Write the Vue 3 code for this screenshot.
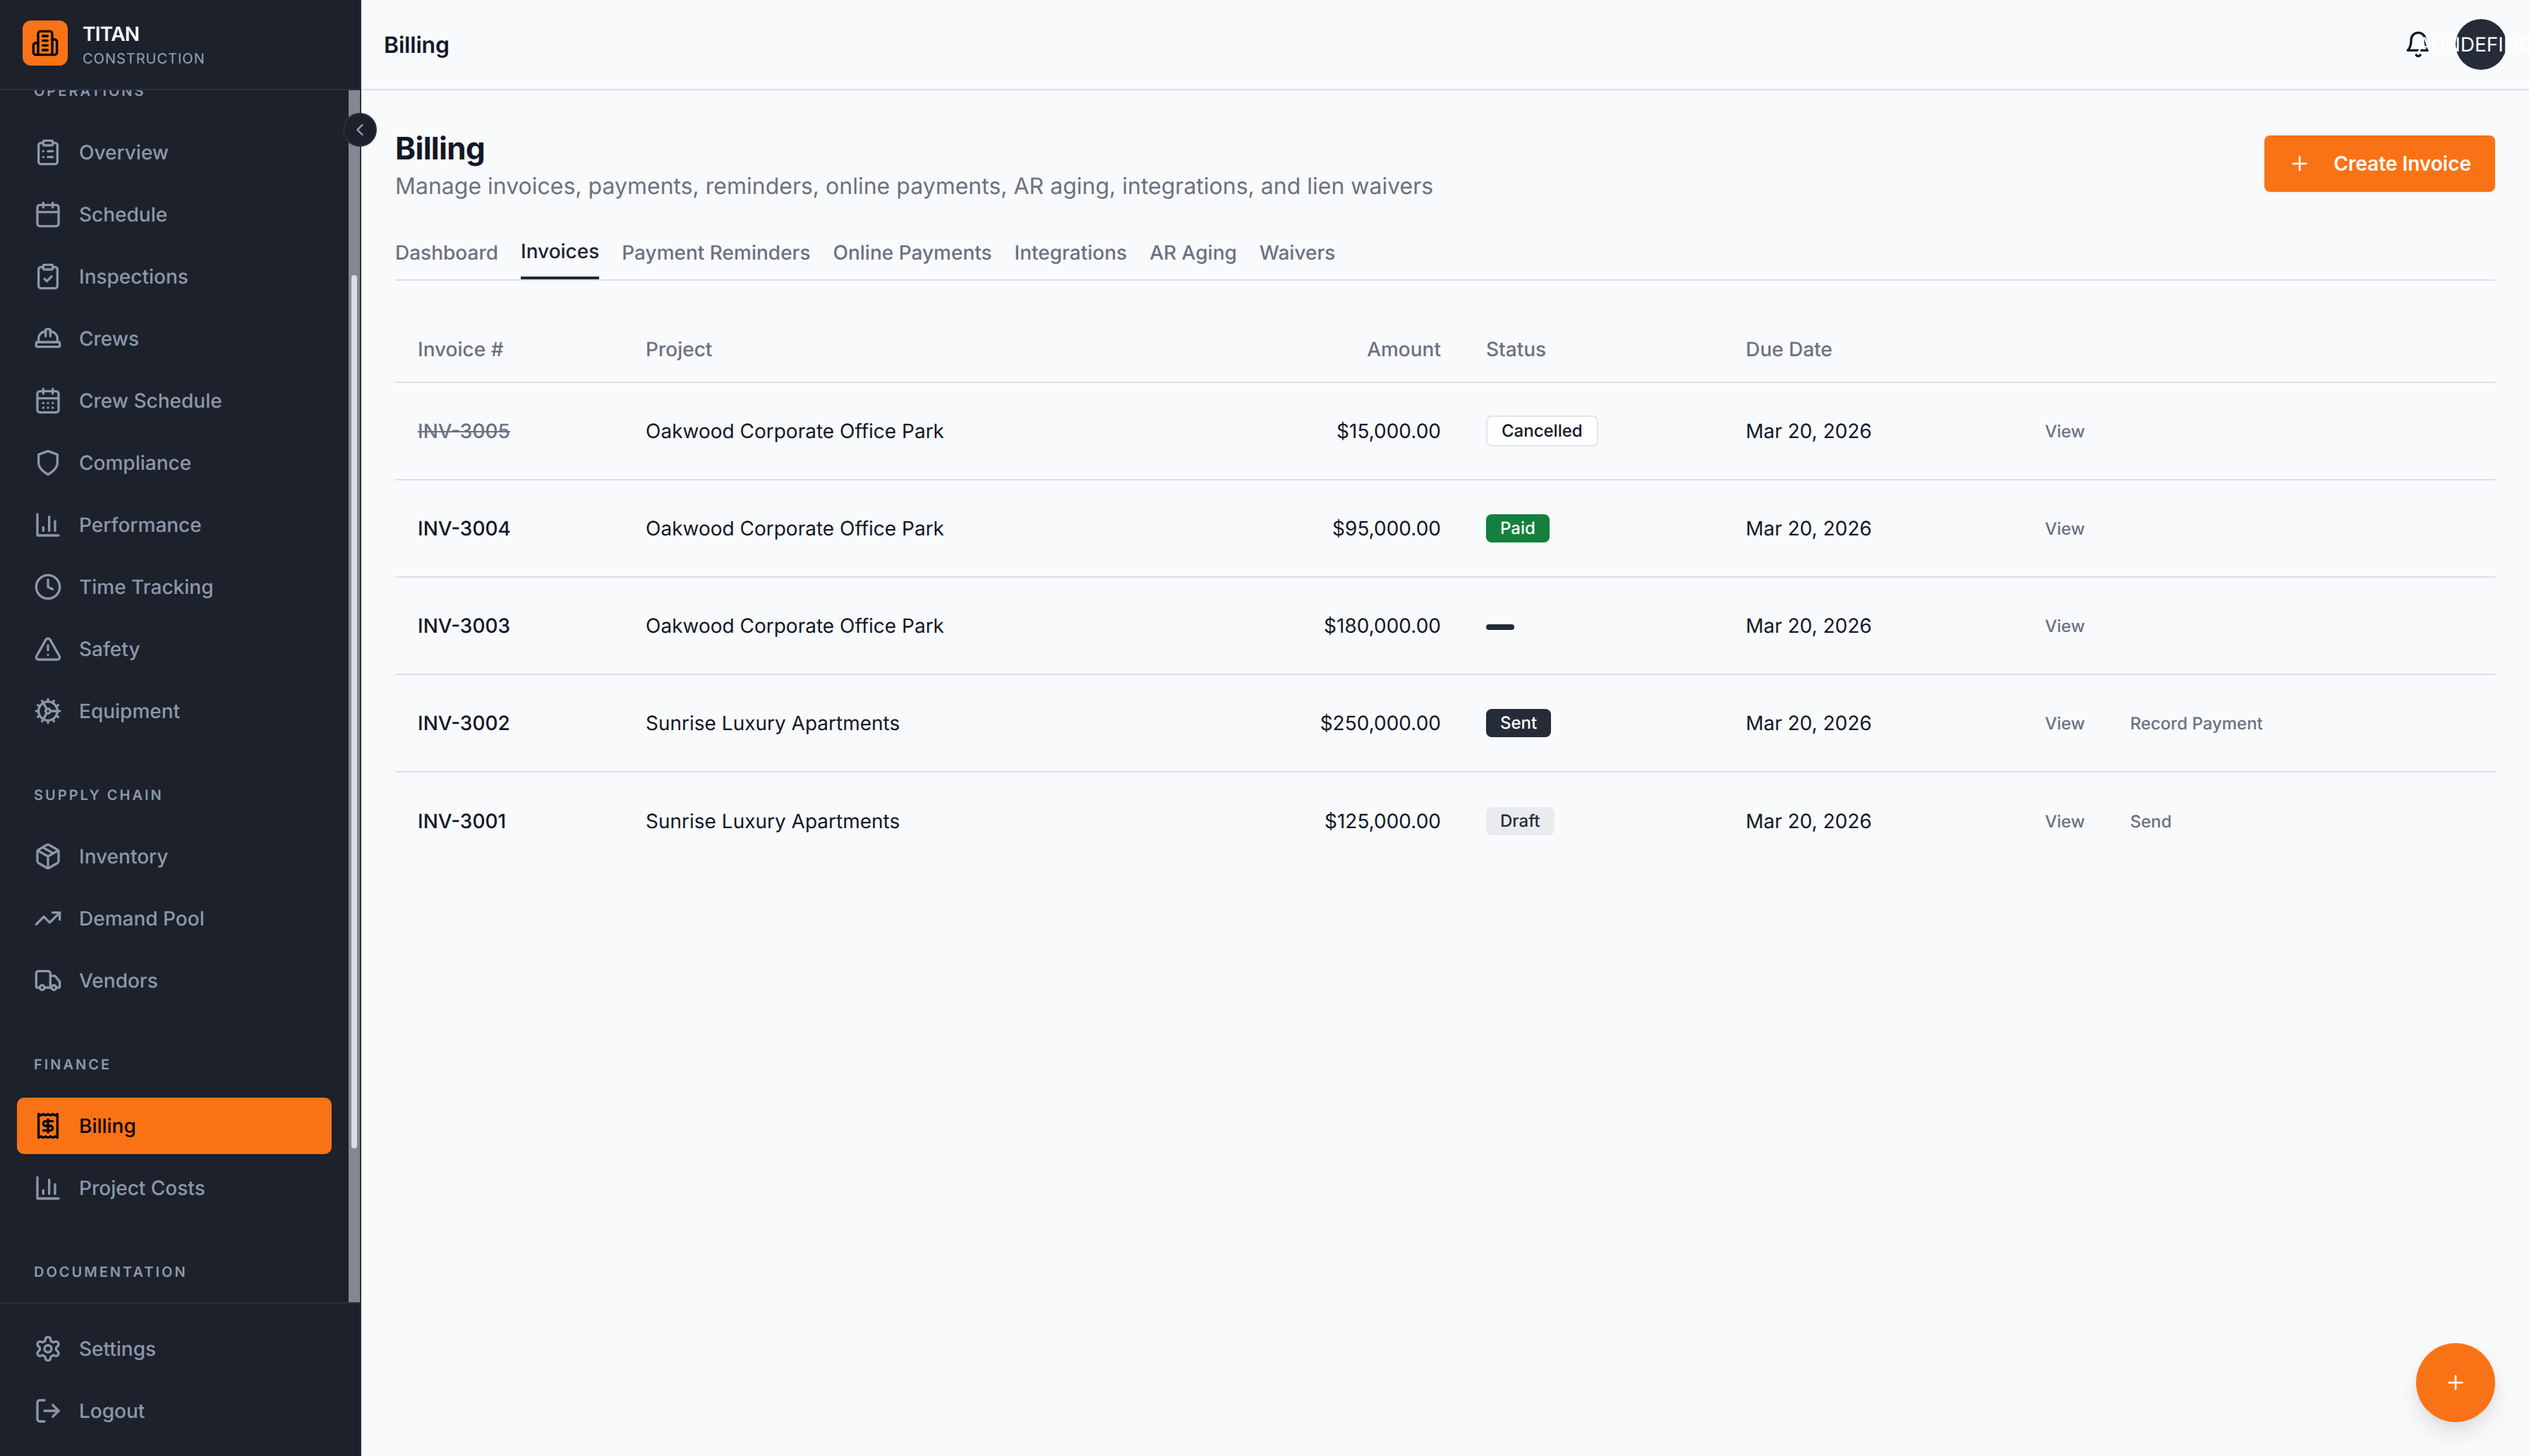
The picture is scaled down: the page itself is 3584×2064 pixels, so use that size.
<script setup>
const rectClip = 'M9 2h6a1 1 0 0 1 1 1v2a1 1 0 0 1-1 1H9a1 1 0 0 1-1-1V3a1 1 0 0 1 1-1z'
const clip = 'M16 4h2a2 2 0 0 1 2 2v14a2 2 0 0 1-2 2H6a2 2 0 0 1-2-2V6a2 2 0 0 1 2-2h2'
const cal = 'M5 4h14a2 2 0 0 1 2 2v14a2 2 0 0 1-2 2H5a2 2 0 0 1-2-2V6a2 2 0 0 1 2-2z'
const chart = ['M3 3v18h18', 'M18 17V9', 'M13 17V5', 'M8 17v-3']

const icons = {
  overview: [rectClip, clip, 'M12 11h4', 'M12 16h4', 'M8 11h.01', 'M8 16h.01'],
  schedule: ['M8 2v4', 'M16 2v4', cal, 'M3 10h18'],
  inspections: [rectClip, clip, 'm9 14 2 2 4-4'],
  crews: ['M10 10V5a1 1 0 0 1 1-1h2a1 1 0 0 1 1 1v5', 'M14 6a6 6 0 0 1 6 6v3', 'M4 15v-3a6 6 0 0 1 6-6', 'M3 15h18a1 1 0 0 1 1 1v2a1 1 0 0 1-1 1H3a1 1 0 0 1-1-1v-2a1 1 0 0 1 1-1z'],
  crewSchedule: ['M8 2v4', 'M16 2v4', cal, 'M3 10h18', 'M8 14h.01', 'M12 14h.01', 'M16 14h.01', 'M8 18h.01', 'M12 18h.01', 'M16 18h.01'],
  compliance: ['M12 22s8-4 8-10V5l-8-3-8 3v7c0 6 8 10 8 10z'],
  chart,
  clock: ['M2 12a10 10 0 1 0 20 0a10 10 0 1 0-20 0', 'M12 6v6l4 2'],
  safety: ['m21.73 18-8-14a2 2 0 0 0-3.48 0l-8 14A2 2 0 0 0 4 21h16a2 2 0 0 0 1.73-3', 'M12 9v4', 'M12 17h.01'],
  cog: ['M12 20a8 8 0 1 0 0-16 8 8 0 0 0 0 16Z', 'M12 14a2 2 0 1 0 0-4 2 2 0 0 0 0 4Z', 'M12 2v2', 'M12 22v-2', 'm17 20.66-1-1.73', 'M11 10.27 7 3.34', 'm20.66 17-1.73-1', 'm3.34 7 1.73 1', 'M14 12h8', 'M2 12h2', 'm20.66 7-1.73 1', 'm3.34 17 1.73-1', 'm17 3.34-1 1.73', 'm11 13.73-4 6.93'],
  package: ['m7.5 4.27 9 5.15', 'M21 8a2 2 0 0 0-1-1.73l-7-4a2 2 0 0 0-2 0l-7 4A2 2 0 0 0 3 8v8a2 2 0 0 0 1 1.73l7 4a2 2 0 0 0 2 0l7-4A2 2 0 0 0 21 16Z', 'm3.3 7 8.7 5 8.7-5', 'M12 22V12'],
  trending: ['M22 7 13.5 15.5 8.5 10.5 2 17', 'M16 7h6v6'],
  truck: ['M14 18V6a2 2 0 0 0-2-2H4a2 2 0 0 0-2 2v11a1 1 0 0 0 1 1h2', 'M15 18H9', 'M19 18h2a1 1 0 0 0 1-1v-3.65a1 1 0 0 0-.22-.624l-3.48-4.35A1 1 0 0 0 17.52 8H14', 'M15 18a2 2 0 1 0 4 0a2 2 0 1 0-4 0', 'M5 18a2 2 0 1 0 4 0a2 2 0 1 0-4 0'],
  receipt: ['M4 2v20l2-1 2 1 2-1 2 1 2-1 2 1 2-1 2 1V2l-2 1-2-1-2 1-2-1-2 1-2-1-2 1Z', 'M16 8h-6a2 2 0 1 0 0 4h4a2 2 0 1 1 0 4H8', 'M12 17.5v-11'],
  settings: ['M12.22 2h-.44a2 2 0 0 0-2 2v.18a2 2 0 0 1-1 1.73l-.43.25a2 2 0 0 1-2 0l-.15-.08a2 2 0 0 0-2.73.73l-.22.38a2 2 0 0 0 .73 2.73l.15.1a2 2 0 0 1 1 1.72v.51a2 2 0 0 1-1 1.74l-.15.09a2 2 0 0 0-.73 2.73l.22.38a2 2 0 0 0 2.73.73l.15-.08a2 2 0 0 1 2 0l.43.25a2 2 0 0 1 1 1.73V20a2 2 0 0 0 2 2h.44a2 2 0 0 0 2-2v-.18a2 2 0 0 1 1-1.73l.43-.25a2 2 0 0 1 2 0l.15.08a2 2 0 0 0 2.73-.73l.22-.39a2 2 0 0 0-.73-2.73l-.15-.08a2 2 0 0 1-1-1.74v-.5a2 2 0 0 1 1-1.74l.15-.09a2 2 0 0 0 .73-2.73l-.22-.38a2 2 0 0 0-2.73-.73l-.15.08a2 2 0 0 1-2 0l-.43-.25a2 2 0 0 1-1-1.73V4a2 2 0 0 0-2-2z', 'M9 12a3 3 0 1 0 6 0a3 3 0 1 0-6 0'],
  logout: ['M9 21H5a2 2 0 0 1-2-2V5a2 2 0 0 1 2-2h4', 'M16 17l5-5-5-5', 'M21 12H9'],
  building: ['M6 22V4a2 2 0 0 1 2-2h8a2 2 0 0 1 2 2v18Z', 'M6 12H4a2 2 0 0 0-2 2v6a2 2 0 0 0 2 2h2', 'M18 9h2a2 2 0 0 1 2 2v9a2 2 0 0 1-2 2h-2', 'M10 6h4', 'M10 10h4', 'M10 14h4', 'M10 18h4'],
  chevron: ['m15 18-6-6 6-6'],
  bell: ['M6 8a6 6 0 0 1 12 0c0 7 3 9 3 9H3s3-2 3-9', 'M10.3 21a1.94 1.94 0 0 0 3.4 0'],
  plus: ['M5 12h14', 'M12 5v14']
}

const sections = [
  { title: 'OPERATIONS', items: [
    { label: 'Overview', icon: 'overview' },
    { label: 'Schedule', icon: 'schedule' },
    { label: 'Inspections', icon: 'inspections' },
    { label: 'Crews', icon: 'crews' },
    { label: 'Crew Schedule', icon: 'crewSchedule' },
    { label: 'Compliance', icon: 'compliance' },
    { label: 'Performance', icon: 'chart' },
    { label: 'Time Tracking', icon: 'clock' },
    { label: 'Safety', icon: 'safety' },
    { label: 'Equipment', icon: 'cog' }
  ] },
  { title: 'SUPPLY CHAIN', items: [
    { label: 'Inventory', icon: 'package' },
    { label: 'Demand Pool', icon: 'trending' },
    { label: 'Vendors', icon: 'truck' }
  ] },
  { title: 'FINANCE', items: [
    { label: 'Billing', icon: 'receipt', active: true },
    { label: 'Project Costs', icon: 'chart' }
  ] },
  { title: 'DOCUMENTATION', items: [] }
]

const footerItems = [
  { label: 'Settings', icon: 'settings' },
  { label: 'Logout', icon: 'logout' }
]

const tabs = ['Dashboard', 'Invoices', 'Payment Reminders', 'Online Payments', 'Integrations', 'AR Aging', 'Waivers']

const rows = [
  { id: 'INV-3005', project: 'Oakwood Corporate Office Park', amount: '$15,000.00', status: 'Cancelled', cls: 'cancelled', actions: ['View'], struck: true },
  { id: 'INV-3004', project: 'Oakwood Corporate Office Park', amount: '$95,000.00', status: 'Paid', cls: 'paid', actions: ['View'] },
  { id: 'INV-3003', project: 'Oakwood Corporate Office Park', amount: '$180,000.00', status: '', cls: 'sent', actions: ['View'] },
  { id: 'INV-3002', project: 'Sunrise Luxury Apartments', amount: '$250,000.00', status: 'Sent', cls: 'sent', actions: ['View', 'Record Payment'] },
  { id: 'INV-3001', project: 'Sunrise Luxury Apartments', amount: '$125,000.00', status: 'Draft', cls: 'draft', actions: ['View', 'Send'] }
]
</script>

<template>
  <div class="app">
    <aside class="sidebar">
      <div class="brand">
        <div class="logo">
          <svg class="ico" viewBox="0 0 24 24"><path v-for="d in icons.building" :key="d" :d="d" /></svg>
        </div>
        <div class="brand-text">
          <div class="brand-name">TITAN</div>
          <div class="brand-sub">CONSTRUCTION</div>
        </div>
      </div>
      <div class="nav-wrap">
        <div class="nav-clip">
          <nav class="nav-scroll">
            <section v-for="s in sections" :key="s.title" class="nav-section">
              <div class="nav-title">{{ s.title }}</div>
              <div class="nav-list">
                <a v-for="it in s.items" :key="it.label" class="nav-item" :class="{ active: it.active }">
                  <svg class="ico" viewBox="0 0 24 24"><path v-for="d in icons[it.icon]" :key="d" :d="d" /></svg>
                  <span>{{ it.label }}</span>
                </a>
              </div>
            </section>
          </nav>
        </div>
        <div class="track"><div class="thumb"></div></div>
      </div>
      <div class="side-foot">
        <a v-for="it in footerItems" :key="it.label" class="nav-item">
          <svg class="ico" viewBox="0 0 24 24"><path v-for="d in icons[it.icon]" :key="d" :d="d" /></svg>
          <span>{{ it.label }}</span>
        </a>
      </div>
      <button class="collapse">
        <svg class="ico" viewBox="0 0 24 24"><path v-for="d in icons.chevron" :key="d" :d="d" /></svg>
      </button>
    </aside>

    <main class="main">
      <header class="topbar">
        <div class="top-title">Billing</div>
        <div class="top-right">
          <svg class="ico bell" viewBox="0 0 24 24"><path v-for="d in icons.bell" :key="d" :d="d" /></svg>
          <div class="avatar"><span>AUNDEFINED</span></div>
        </div>
      </header>

      <div class="content">
        <div class="page-head">
          <div>
            <h1>Billing</h1>
            <p>Manage invoices, payments, reminders, online payments, AR aging, integrations, and lien waivers</p>
          </div>
          <button class="create">
            <svg class="ico" viewBox="0 0 24 24"><path v-for="d in icons.plus" :key="d" :d="d" /></svg>
            <span>Create Invoice</span>
          </button>
        </div>

        <div class="tabs">
          <div v-for="t in tabs" :key="t" class="tab" :class="{ on: t === 'Invoices' }">{{ t }}</div>
        </div>

        <table class="grid">
          <colgroup>
            <col class="c1" /><col class="c2" /><col class="c3" /><col class="c4" /><col class="c5" /><col />
          </colgroup>
          <thead>
            <tr>
              <th>Invoice #</th>
              <th>Project</th>
              <th class="right">Amount</th>
              <th>Status</th>
              <th>Due Date</th>
              <th></th>
            </tr>
          </thead>
          <tbody>
            <tr v-for="r in rows" :key="r.id">
              <td class="inv" :class="{ struck: r.struck }">{{ r.id }}</td>
              <td>{{ r.project }}</td>
              <td class="right">{{ r.amount }}</td>
              <td><span class="badge" :class="r.cls">{{ r.status }}</span></td>
              <td>Mar 20, 2026</td>
              <td class="acts">
                <span v-for="a in r.actions" :key="a">{{ a }}</span>
              </td>
            </tr>
          </tbody>
        </table>
      </div>

      <button class="fab">
        <svg class="ico" viewBox="0 0 24 24"><path v-for="d in icons.plus" :key="d" :d="d" /></svg>
      </button>
    </main>
  </div>
</template>

<style>
html, body { margin: 0; padding: 0; }
</style>

<style scoped>
.app {
  display: flex;
  width: 100vw;
  height: 100vh;
  overflow: hidden;
  font-family: Inter, "Liberation Sans", sans-serif;
  font-size: 28px;
  background: #f9fafc;
  color: #111827;
  text-rendering: geometricPrecision;
}
.ico {
  width: 40px;
  height: 40px;
  flex: none;
  fill: none;
  stroke: currentColor;
  stroke-width: 2;
  stroke-linecap: round;
  stroke-linejoin: round;
}

/* Sidebar */
.sidebar {
  position: relative;
  z-index: 2;
  width: 512px;
  flex: none;
  box-sizing: border-box;
  height: 100%;
  display: flex;
  flex-direction: column;
  background: #1c212c;
  border-right: 2px solid #2a303c;
}
.brand {
  height: 128px;
  flex: none;
  box-sizing: border-box;
  display: flex;
  align-items: center;
  gap: 21px;
  padding: 0 32px 4px;
  border-bottom: 2px solid #2a303c;
  position: relative;
  z-index: 1;
  background: #1c212c;
}
.logo {
  width: 64px;
  height: 64px;
  border-radius: 12px;
  background: #f97316;
  color: #000;
  display: flex;
  align-items: center;
  justify-content: center;
}
.brand-text { margin-top: 5px; }
.brand-name {
  font-size: 28px;
  line-height: 36px;
  font-weight: 600;
  letter-spacing: -0.7px;
  color: #f8fafc;
}
.brand-sub {
  font-size: 20px;
  line-height: 28px;
  margin-top: 3px;
  letter-spacing: 1px;
  color: #94a3b8;
}
.nav-wrap {
  flex: 1;
  min-height: 0;
  display: flex;
}
.nav-clip {
  flex: 1;
  min-width: 0;
  overflow: hidden;
}
.nav-scroll {
  margin-top: -15px;
  padding: 0 24px;
}
.nav-section { margin-bottom: 63px; }
.nav-title {
  height: 32px;
  line-height: 32px;
  font-size: 20px;
  font-weight: 600;
  letter-spacing: 3px;
  padding-left: 24px;
  margin-bottom: 31px;
  color: #8c98a9;
}
.nav-list {
  display: flex;
  flex-direction: column;
  gap: 8px;
}
.nav-item {
  height: 80px;
  box-sizing: border-box;
  display: flex;
  align-items: center;
  gap: 24px;
  padding: 0 24px;
  border-radius: 10px;
  color: #8c98a9;
  font-size: 28px;
  font-weight: 500;
  width: 446px;
}
.nav-item.active {
  background: #f97316;
  color: #000;
}
.track {
  width: 16px;
  flex: none;
  background: #84878f;
  box-sizing: border-box;
  padding: 262px 4px 0;
}
.thumb {
  height: 1238px;
  background: #dadde6;
  border-radius: 4px;
}
.side-foot {
  flex: none;
  height: 218px;
  box-sizing: border-box;
  padding: 24px 24px 0;
  display: flex;
  flex-direction: column;
  gap: 8px;
  border-top: 2px solid #2a303c;
}
.collapse {
  position: absolute;
  top: 160px;
  left: 486px;
  width: 48px;
  height: 48px;
  padding: 0;
  box-sizing: border-box;
  border-radius: 50%;
  border: 2px solid #2a303c;
  background: #1c212c;
  color: #94a3b8;
  display: flex;
  align-items: center;
  justify-content: center;
}
.collapse .ico { width: 28px; height: 28px; }

/* Main */
.main {
  position: relative;
  flex: 1;
  min-width: 0;
  display: flex;
  flex-direction: column;
}
.topbar {
  height: 128px;
  flex: none;
  box-sizing: border-box;
  display: flex;
  align-items: center;
  justify-content: space-between;
  padding: 0 32px;
  border-bottom: 2px solid #dce1e9;
}
.top-title {
  font-size: 32px;
  font-weight: 600;
  letter-spacing: -0.2px;
  color: #111827;
}
.top-right {
  display: flex;
  align-items: center;
  gap: 33px;
}
.bell { color: #111827; }
.avatar {
  position: relative;
  width: 72px;
  height: 72px;
  border-radius: 50%;
  background: #252c38;
  color: #fff;
  display: flex;
  align-items: center;
  justify-content: center;
  font-size: 28px;
  white-space: nowrap;
}
.content {
  flex: 1;
  padding: 64px 48px 0;
}
.page-head {
  display: flex;
  justify-content: space-between;
  align-items: flex-start;
}
h1 {
  margin: 0 0 12px;
  font-size: 44px;
  line-height: 36px;
  font-weight: 700;
  letter-spacing: -0.7px;
  color: #111827;
}
.page-head p {
  margin: 0;
  font-size: 32px;
  line-height: 48px;
  color: #6b7280;
}
.create {
  height: 80px;
  box-sizing: border-box;
  display: flex;
  align-items: center;
  gap: 32px;
  padding: 0 34px;
  border: 0;
  border-radius: 8px;
  background: #f97316;
  color: #fff;
  font: 600 28px Inter, sans-serif;
  box-shadow: 0 2px 4px rgba(0, 0, 0, 0.05);
}
.create .ico { width: 32px; height: 32px; }
.tabs {
  display: flex;
  align-items: flex-end;
  gap: 32px;
  margin-top: 48px;
  border-bottom: 2px solid #dce1e9;
}
.tab {
  line-height: 40px;
  padding-bottom: 16px;
  border-bottom: 2px solid transparent;
  color: #6b7280;
  font-size: 28px;
  font-weight: 500;
}
.tab.on {
  color: #1e2530;
  border-bottom: 4px solid #252c38;
}
.grid {
  width: 100%;
  margin-top: 50px;
  table-layout: fixed;
  border-collapse: separate;
  border-spacing: 0;
}
.c1 { width: 323px; }
.c2 { width: 880px; }
.c3 { width: 311px; }
.c4 { width: 368px; }
.c5 { width: 424px; }
th {
  height: 95px;
  box-sizing: border-box;
  padding: 0 32px;
  text-align: left;
  font-weight: 500;
  color: #6b7280;
  border-bottom: 2px solid #dcdfe7;
}
td {
  height: 138px;
  box-sizing: border-box;
  padding: 0 32px;
  color: #111827;
  border-bottom: 2px solid #dcdfe7;
  white-space: nowrap;
}
tbody tr:last-child td { border-bottom: 0; }
.right { text-align: right; }
.inv { font-weight: 500; }
.struck {
  color: #6b7280;
  text-decoration: line-through;
}
.badge {
  display: inline-block;
  box-sizing: border-box;
  min-height: 8px;
  padding: 4px 20px;
  border-radius: 8px;
  font-size: 24px;
  line-height: 32px;
  font-weight: 500;
  vertical-align: middle;
}
.cancelled {
  background: #fff;
  border: 2px solid #e2e5ec;
  color: #111827;
}
.paid { background: #15803d; color: #fff; }
.sent { background: #252c38; color: #fff; }
.draft { background: #e9ebef; color: #252c38; }
.acts {
  font-size: 24px;
  font-weight: 500;
  color: #6b7280;
}
.acts span { margin-right: 64px; }
.fab {
  position: absolute;
  right: 48px;
  bottom: 48px;
  width: 112px;
  height: 112px;
  padding: 0;
  border: 0;
  border-radius: 50%;
  background: #f97316;
  color: #fff;
  display: flex;
  align-items: center;
  justify-content: center;
  box-shadow: 0 16px 32px rgba(0, 0, 0, 0.1), 0 4px 8px rgba(0, 0, 0, 0.04);
}
.fab .ico { width: 32px; height: 32px; }
</style>
